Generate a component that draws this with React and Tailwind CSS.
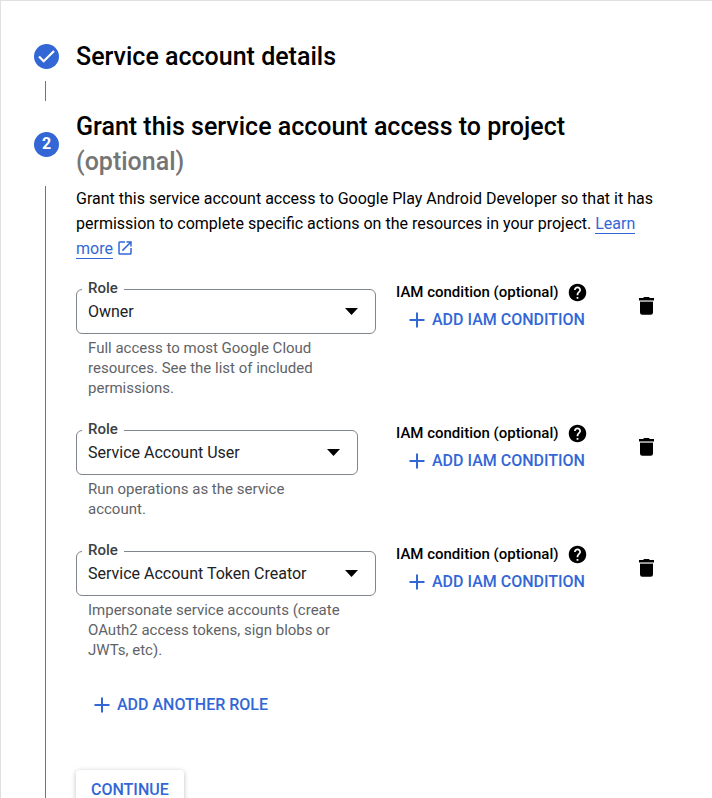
import { useState } from "react";
import { MdHelp, MdOpenInNew } from "react-icons/md";

const ROLES = ["Owner", "Service Account User", "Service Account Token Creator"];

const initialRows = [
  {
    id: 1,
    role: "Owner",
    width: "w-[300px]",
    help: "Full access to most Google Cloud resources. See the list of included permissions.",
  },
  {
    id: 2,
    role: "Service Account User",
    width: "w-[282px]",
    help: "Run operations as the service account.",
  },
  {
    id: 3,
    role: "Service Account Token Creator",
    width: "w-[300px]",
    help: "Impersonate service accounts (create OAuth2 access tokens, sign blobs or JWTs, etc).",
  },
];

function PlusIcon() {
  return (
    <svg className="h-4 w-4 shrink-0" viewBox="0 0 16 16" fill="currentColor">
      <path d="M7 0.500h2v6.500h6.500v2H9v6.500H7V9H0.500V7H7z" />
    </svg>
  );
}

function TrashIcon() {
  return (
    <svg className="h-[18px] w-[15px]" viewBox="0 0 15 18">
      <path d="M5 0h5l.8 1H15v2.500H0V1h4.200z" fill="#000" />
      <path d="M1 3.500h13v1.500H1z" fill="#9e9e9e" />
      <path d="M1 5h13v10.500a2.300 2.300 0 0 1-2.300 2.300H3.300A2.300 2.300 0 0 1 1 15.500z" fill="#000" />
    </svg>
  );
}

function RoleRow({ row, onChange, onDelete }) {
  const selectId = `role-${row.id}`;

  return (
    <div className="flex items-start gap-5">
      <div className="w-[300px] pt-2">
        <div className={`relative max-w-full ${row.width}`}>
          <label
            htmlFor={selectId}
            className="absolute -top-[11px] left-1.5 bg-white px-1.5 text-[15px] leading-5 font-medium text-[#3c4043]"
          >
            Role
          </label>
          <select
            id={selectId}
            value={row.role}
            onChange={(e) => onChange(row.id, e.target.value)}
            className="block h-[45px] w-full appearance-none rounded-md border border-[#80868b] bg-white pr-10 pl-[11px] text-base text-[#202124]"
          >
            {ROLES.map((role) => (
              <option key={role}>{role}</option>
            ))}
          </select>
          <svg
            className="pointer-events-none absolute top-[19px] right-[18px] h-[7px] w-[13px]"
            viewBox="0 0 13 7"
          >
            <path d="M0 0h13L6.500 7z" fill="#000" />
          </svg>
        </div>
        <p className="mt-1 w-[280px] px-3 text-[15px] leading-5 text-[#5f6368]">
          {row.help}
        </p>
      </div>

      <div className="flex-1">
        <div className="flex h-[22px] items-center gap-2 text-[15px] font-medium whitespace-nowrap">
          <span>IAM condition (optional)</span>
          <button type="button" aria-label="About IAM conditions">
            <MdHelp className="size-[21px]" />
          </button>
        </div>
        <button
          type="button"
          className="mt-[5px] flex h-6 items-center gap-[7px] pl-[13px] text-base font-medium whitespace-nowrap text-[#3367d6]"
        >
          <PlusIcon />
          ADD IAM CONDITION
        </button>
      </div>

      <button
        type="button"
        aria-label="Delete role"
        onClick={() => onDelete(row.id)}
        className="mt-2 flex h-[34px] w-9 items-center justify-center"
      >
        <TrashIcon />
      </button>
    </div>
  );
}

export default function App() {
  const [rows, setRows] = useState(initialRows);

  const changeRole = (id, role) => {
    setRows(rows.map((row) => (row.id === id ? { ...row, role } : row)));
  };

  const deleteRow = (id) => {
    setRows(rows.filter((row) => row.id !== id));
  };

  const addRow = () => {
    setRows([...rows, { id: Date.now(), role: "Owner", width: "w-[300px]", help: "" }]);
  };

  return (
    <main className="min-h-screen border-t border-l border-[#e0e0e0] bg-white pt-[38px] pr-12 pl-[33px] font-[Roboto,sans-serif] text-black">
      <div className="flex items-center gap-[17px]">
        <span className="flex size-[25px] shrink-0 items-center justify-center rounded-full bg-[#3367d6]">
          <svg className="size-[17px]" viewBox="0 0 17 17" fill="none">
            <path d="M1 8.500l4.700 4.700L16 3" stroke="#fff" strokeWidth="2.200" />
          </svg>
        </span>
        <h2 className="text-[25px] leading-[35px] font-medium">Service account details</h2>
      </div>
      <div className="mt-[7px] mb-2 ml-[11px] h-5 border-l border-[#757575]" />

      <div className="flex items-center gap-[17px]">
        <span className="flex size-[25px] shrink-0 items-center justify-center rounded-full bg-[#3367d6] text-base font-bold text-white">
          2
        </span>
        <h2 className="text-[25px] leading-[35px] font-medium">
          Grant this service account access to project{" "}
          <span className="text-[#757575]">(optional)</span>
        </h2>
      </div>

      <div className="mt-[7px] flex gap-[17px]">
        <div className="flex w-[25px] shrink-0 pl-[11px]">
          <div className="border-l border-[#757575]" />
        </div>
        <div className="min-w-0 flex-1">
          <p className="text-base leading-[25px]">
            Grant this service account access to Google Play Android Developer so
            that it has permission to complete specific actions on the resources
            in your project.{" "}
            <a href="#learn-more" className="text-[#3367d6]">
              <span className="border-b border-[#3367d6]">Learn more</span>
              <MdOpenInNew className="ml-[3px] inline size-[18px] align-[-3px]" />
            </a>
          </p>

          <div className="mt-5 flex flex-col gap-6">
            {rows.map((row) => (
              <RoleRow key={row.id} row={row} onChange={changeRole} onDelete={deleteRow} />
            ))}
          </div>

          <button
            type="button"
            onClick={addRow}
            className="mt-[33px] ml-[18px] flex h-6 items-center gap-[7px] text-base font-medium text-[#3367d6]"
          >
            <PlusIcon />
            ADD ANOTHER ROLE
          </button>

          <button
            type="button"
            className="mt-[53px] h-10 rounded px-[15px] text-base font-medium text-[#3367d6] shadow-[0_1px_5px_rgba(0,0,0,0.25)]"
          >
            CONTINUE
          </button>
        </div>
      </div>
    </main>
  );
}
